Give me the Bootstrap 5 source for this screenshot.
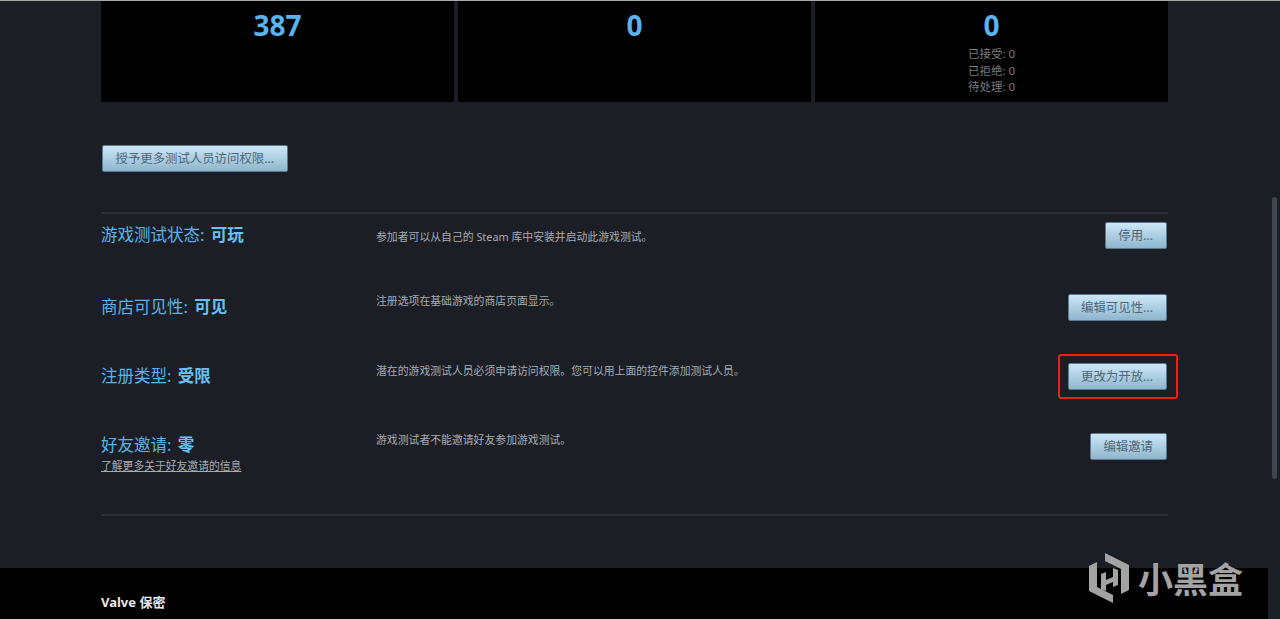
<!doctype html>
<html lang="zh-CN">
<head>
<meta charset="utf-8">
<title>游戏测试</title>
<link href="https://cdn.jsdelivr.net/npm/bootstrap@5.3.0/dist/css/bootstrap.min.css" rel="stylesheet">
<style>
html,body{height:619px;overflow:hidden}
body{background:#1b1e24;font-family:"Noto Sans","Noto Sans CJK SC",sans-serif;color:#acb2b8}
.page-shell{height:619px;border-top:1px solid #a9a9a9;position:relative;overflow:hidden}
.page-wrap{margin-left:101px;width:1067px}
.stat-row{gap:4px;height:101px}
.stat-box{flex:1 1 0;background:#000;text-align:center}
.stat-num{font-weight:700;font-size:28px;line-height:30px;color:#5ab3ec;margin-top:9px}
.stat-sub{font-size:11.5px;line-height:16.7px;color:#7b7b7b;margin-top:6px}
.sky-btn{display:block;height:27px;padding:0 13px 0 12.5px;border:1px solid #5b7a92;border-radius:2px;font-size:12.4px;line-height:25px;color:#4f677a;background:linear-gradient(#cbe7f6,#8fb6cd);white-space:nowrap}
.grant-wrap{padding-top:43px;padding-left:1px;padding-bottom:40px}
.rule-line{height:2px;background:#2b2e33}
.opt-list{height:300px}
.opt-row{display:flex;position:relative;padding-top:8px}
.opt-left{width:275px;flex:none}
.opt-title{font-size:16.5px;line-height:22px;color:#5ab3ec;word-spacing:2px}
.opt-title b{font-weight:700;color:#67c1f5}
.opt-link{display:block;font-size:10.8px;line-height:14px;color:#a6acb2;text-decoration:underline;margin-top:3px}
.opt-desc{flex:1;font-size:10.85px;line-height:14px;color:#a6acb2}
.opt-action{flex:none;margin-right:1px}
.row-a{height:72px}
.row-b{height:69px}
.row-c{height:70px}
.row-d{height:89px}
.row-a .opt-left,.row-b .opt-left,.row-c .opt-left{padding-top:2px}
.row-d .opt-left{padding-top:1px}
.row-a .opt-desc{padding-top:8px}
.row-c .opt-desc{padding-top:1px}
.hilite{position:absolute;border:2px solid #f01d14;border-radius:3px;right:-11px;top:-9px;width:120px;height:45px}
.foot-band{position:absolute;left:0;right:12px;top:567px;height:60px;background:#000;padding:26px 0 0 101px;font-size:13px;line-height:16px;font-weight:700;color:#e8e8e8}
.scroll-thumb{position:absolute;left:1272px;top:196px;width:5px;height:282px;border-radius:3px;background:#3e4650}
.mark-logo{position:absolute;left:1088px;top:552px;display:flex;align-items:center;gap:8px;color:#a3a3a3;font-size:35px;line-height:50px;font-weight:700;font-family:"Noto Sans CJK SC",sans-serif}
</style>
</head>
<body>
<div class="page-shell">
  <div class="page-wrap">
    <div class="d-flex stat-row">
      <div class="stat-box"><div class="stat-num">387</div></div>
      <div class="stat-box"><div class="stat-num">0</div></div>
      <div class="stat-box">
        <div class="stat-num">0</div>
        <div class="stat-sub">已接受: 0<br>已拒绝: 0<br>待处理: 0</div>
      </div>
    </div>
    <div class="grant-wrap d-flex"><a class="sky-btn text-decoration-none" href="#">授予更多测试人员访问权限...</a></div>
    <div class="rule-line"></div>
    <div class="opt-list">
      <div class="opt-row row-a">
        <div class="opt-left"><div class="opt-title">游戏测试状态: <b>可玩</b></div></div>
        <div class="opt-desc">参加者可以从自己的 Steam 库中安装并启动此游戏测试。</div>
        <div class="opt-action"><a class="sky-btn text-decoration-none" href="#">停用...</a></div>
      </div>
      <div class="opt-row row-b">
        <div class="opt-left"><div class="opt-title">商店可见性: <b>可见</b></div></div>
        <div class="opt-desc">注册选项在基础游戏的商店页面显示。</div>
        <div class="opt-action"><a class="sky-btn text-decoration-none" href="#">编辑可见性...</a></div>
      </div>
      <div class="opt-row row-c">
        <div class="opt-left"><div class="opt-title">注册类型: <b>受限</b></div></div>
        <div class="opt-desc">潜在的游戏测试人员必须申请访问权限。您可以用上面的控件添加测试人员。</div>
        <div class="opt-action position-relative"><a class="sky-btn text-decoration-none" href="#">更改为开放...</a><div class="hilite"></div></div>
      </div>
      <div class="opt-row row-d">
        <div class="opt-left"><div class="opt-title">好友邀请: <b>零</b></div><a class="opt-link" href="#">了解更多关于好友邀请的信息</a></div>
        <div class="opt-desc">游戏测试者不能邀请好友参加游戏测试。</div>
        <div class="opt-action"><a class="sky-btn text-decoration-none" href="#">编辑邀请</a></div>
      </div>
    </div>
    <div class="rule-line"></div>
  </div>
  <div class="foot-band">Valve 保密</div>
  <div class="scroll-thumb"></div>
  <div class="mark-logo">
    <svg width="42" height="50" viewBox="0 0 42 50" fill="#a3a3a3"><path d="M17 0 41 12V37L33 41V16L17 8Z M25 50 1 38V13L9 9V34L25 42Z M13 21 18 19V27L25 24V15L30 17V32L25 34V29L18 32V38L13 36Z"/></svg>
    <span>小黑盒</span>
  </div>
</div>
<script src="https://cdn.jsdelivr.net/npm/bootstrap@5.3.0/dist/js/bootstrap.bundle.min.js"></script>
</body>
</html>
